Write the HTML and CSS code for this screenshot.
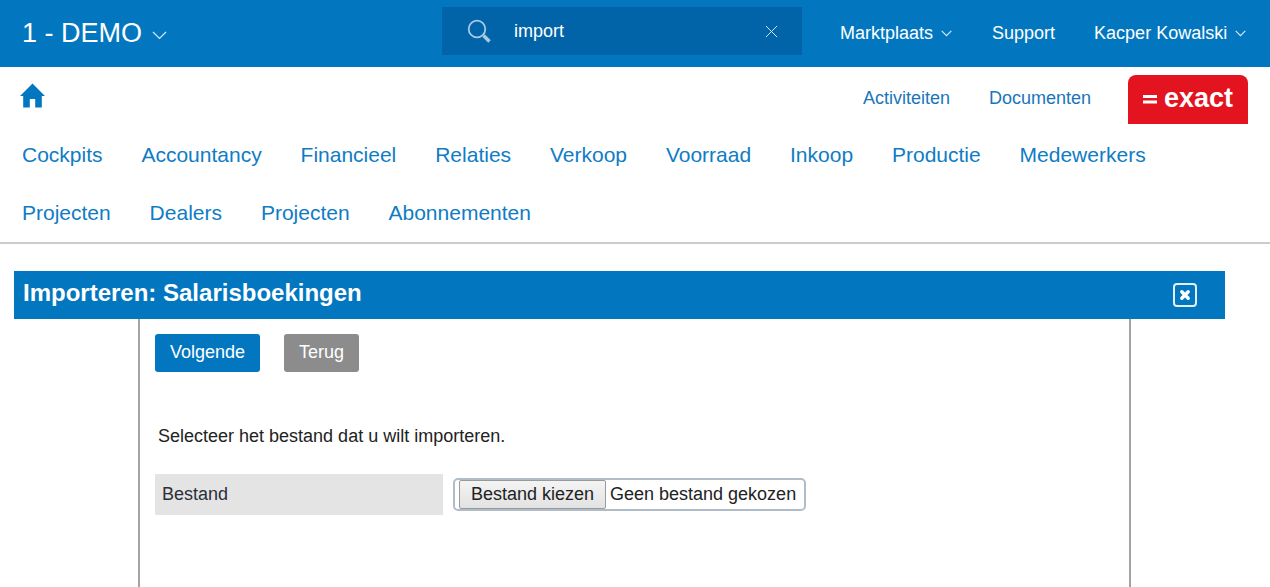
FILE: index.html
```html
<!DOCTYPE html>
<html lang="nl">
<head>
<meta charset="utf-8">
<title>Importeren: Salarisboekingen</title>
<link rel="stylesheet" href="styles.css">
</head>
<body>
<header class="topbar">
  <div class="brand">
    <span>1 - DEMO</span>
    <svg class="chev-lg" viewBox="0 0 15 9"><path d="M1 1l6.500 6.500L14 1"/></svg>
  </div>
  <div class="search">
    <svg class="search-icon" viewBox="0 0 24 24"><circle cx="10" cy="10" r="8.300"/><path class="handle" d="M16.500 16.500l6 6"/></svg>
    <span class="search-text">import</span>
    <svg class="search-clear" viewBox="0 0 14 14"><path d="M1 1l12 12M13 1L1 13"/></svg>
  </div>
  <nav class="usernav">
    <a class="usernav-market">Marktplaats<svg class="chev" viewBox="0 0 11 7"><path d="M.7.900l4.800 4.800L10.300.900"/></svg></a>
    <a class="usernav-support">Support</a>
    <a class="usernav-user">Kacper Kowalski<svg class="chev" viewBox="0 0 11 7"><path d="M.7.900l4.800 4.800L10.300.900"/></svg></a>
  </nav>
</header>
<section class="subbar">
  <svg class="home" viewBox="0 0 25 24"><path d="M12.500 0L0 12.500h3.200V24h6.600v-8.500h5.400V24h6.600V12.500H25z"/></svg>
  <div class="sublinks">
    <a>Activiteiten</a>
    <a>Documenten</a>
  </div>
  <div class="logo">
    <svg viewBox="0 0 120 49" width="120" height="49"><rect x="15" y="20" width="14" height="3" fill="#fff"/><rect x="15" y="25.500" width="14" height="3" fill="#fff"/><text x="36" y="32" textLength="69" lengthAdjust="spacingAndGlyphs" class="logo-text">exact</text></svg>
  </div>
</section>
<nav class="mainnav">
  <a>Cockpits</a><a>Accountancy</a><a>Financieel</a><a>Relaties</a><a>Verkoop</a><a>Voorraad</a><a>Inkoop</a><a>Productie</a><a>Medewerkers</a><a>Projecten</a><a>Dealers</a><a>Projecten</a><a>Abonnementen</a>
</nav>
<main class="page">
  <div class="titlebar">
    <h1>Importeren: Salarisboekingen</h1>
    <button class="closebtn" aria-label="Sluiten"><svg viewBox="0 0 12 12"><path d="M2.800 2.800l6.400 6.400M9.200 2.800l-6.400 6.400"/></svg></button>
  </div>
  <div class="panel">
    <div class="actions">
      <button class="btn btn-primary">Volgende</button>
      <button class="btn btn-muted">Terug</button>
    </div>
    <p class="intro">Selecteer het bestand dat u wilt importeren.</p>
    <div class="field">
      <div class="field-label">Bestand</div>
      <div class="filepicker">
        <span class="filebtn">Bestand kiezen</span>
        <span class="filename">Geen bestand gekozen</span>
      </div>
    </div>
  </div>
</main>
</body>
</html>
```
FILE: styles.css
```css
* { box-sizing: border-box; }
html, body { margin: 0; height: 100%; overflow: hidden; }
body {
  display: flex;
  flex-direction: column;
  font-family: "Liberation Sans", Arial, sans-serif;
  color: #222;
  background: #fff;
}
a { cursor: pointer; }
.topbar {
  flex: none;
  height: 67px;
  background: #0277bf;
  color: #fff;
  display: flex;
  align-items: center;
  padding-left: 22px;
}
.brand {
  width: 420px;
  display: flex;
  align-items: center;
  gap: 10px;
  font-size: 27px;
}
.chev-lg { width: 15px; height: 9px; margin-top: 4px; }
.chev-lg path, .chev path { fill: none; stroke: #d5e8f5; stroke-width: 1.200; }
.search {
  width: 360px;
  height: 48px;
  background: #0164a8;
  display: flex;
  align-items: center;
  padding-left: 25px;
  margin-top: -5px;
}
.search-icon { width: 24px; height: 24px; fill: none; stroke: #a6cbe4; stroke-width: 1.800; }
.search-icon .handle { stroke-width: 3.500; }
.search-text { margin-left: 23px; width: 251px; font-size: 18px; }
.search-clear { width: 13px; height: 13px; stroke: #e8f2f9; stroke-width: 1; fill: none; }
.usernav { display: flex; align-items: center; font-size: 18px; margin-left: 38px; }
.usernav a { display: inline-flex; align-items: center; gap: 8px; white-space: pre; }
.usernav-support { margin-left: 40px; }
.usernav-user { margin-left: 39px; }
.chev { width: 11px; height: 7px; }
.subbar {
  flex: none;
  height: 58px;
  display: flex;
  align-items: center;
  padding-left: 20px;
}
.home { width: 25px; height: 25px; fill: #0277bf; margin-top: -1px; }
.sublinks {
  margin-left: auto;
  display: flex;
  gap: 39px;
  font-size: 18px;
  color: #1a75bb;
  margin-top: 5px;
}
.logo {
  width: 120px;
  height: 49px;
  margin: 8px 22px 0 37px;
  background: #e3141f;
  border-radius: 8px 8px 0 0;
  align-self: flex-start;
}
.logo svg { display: block; }
.logo-text { font-family: "Liberation Sans", sans-serif; font-weight: 700; font-size: 27px; fill: #fff; }
.mainnav {
  flex: none;
  width: 1180px;
  display: flex;
  flex-wrap: wrap;
  column-gap: 38.900px;
  padding: 1px 0 0 22px;
  font-size: 21px;
  line-height: 58px;
  color: #0f7cc4;
}
.page {
  flex: 1;
  min-height: 0;
  border-top: 2px solid #ccc;
  padding-top: 27px;
  display: flex;
  flex-direction: column;
}
.titlebar {
  flex: none;
  margin-left: 14px;
  width: 1211px;
  height: 48px;
  background: #0277bf;
  color: #fff;
  display: flex;
  align-items: center;
  justify-content: space-between;
  padding: 0 28px 0 9px;
}
.titlebar h1 { margin: -4px 0 0; font-size: 24px; font-weight: 700; }
.closebtn {
  width: 24px;
  height: 24px;
  padding: 0;
  background: none;
  border: 2px solid #e3eff8;
  border-radius: 4px;
  display: flex;
  align-items: center;
  justify-content: center;
}
.closebtn svg { width: 12px; height: 12px; fill: none; stroke: #fff; stroke-width: 3.400; stroke-linecap: round; }
.panel {
  flex: 1;
  margin-left: 138px;
  width: 993px;
  border-left: 2px solid #a3a3a3;
  border-right: 2px solid #a3a3a3;
  padding: 15px 15px 0;
}
.actions { display: flex; gap: 24px; }
.btn {
  height: 38px;
  padding: 0 0 2px;
  border: 0;
  border-radius: 3px;
  color: #fff;
  font: 18px "Liberation Sans", Arial, sans-serif;
}
.btn-primary { background: #0277bf; width: 105px; }
.btn-muted { background: #8c8c8c; width: 75px; }
.intro { margin: 54px 0 0 3px; font-size: 18px; line-height: 20px; }
.field { display: flex; align-items: center; margin-top: 28px; }
.field-label {
  width: 288px;
  height: 41px;
  line-height: 41px;
  padding-left: 7px;
  font-size: 18px;
  background: #e4e4e4;
  color: #2b2f38;
}
.filepicker {
  margin-left: 10px;
  width: 353px;
  height: 33px;
  border: 2px solid #b0bdc8;
  border-radius: 5px;
  display: flex;
  align-items: center;
  padding-left: 4px;
  font-size: 18px;
}
.filebtn {
  height: 29px;
  line-height: 27px;
  width: 147px;
  text-align: center;
  border: 1px solid #9a9a9a;
  border-radius: 2px;
  background: linear-gradient(#f4f4f4, #e2e2e2);
}
.filename { margin-left: 4px; }
```
